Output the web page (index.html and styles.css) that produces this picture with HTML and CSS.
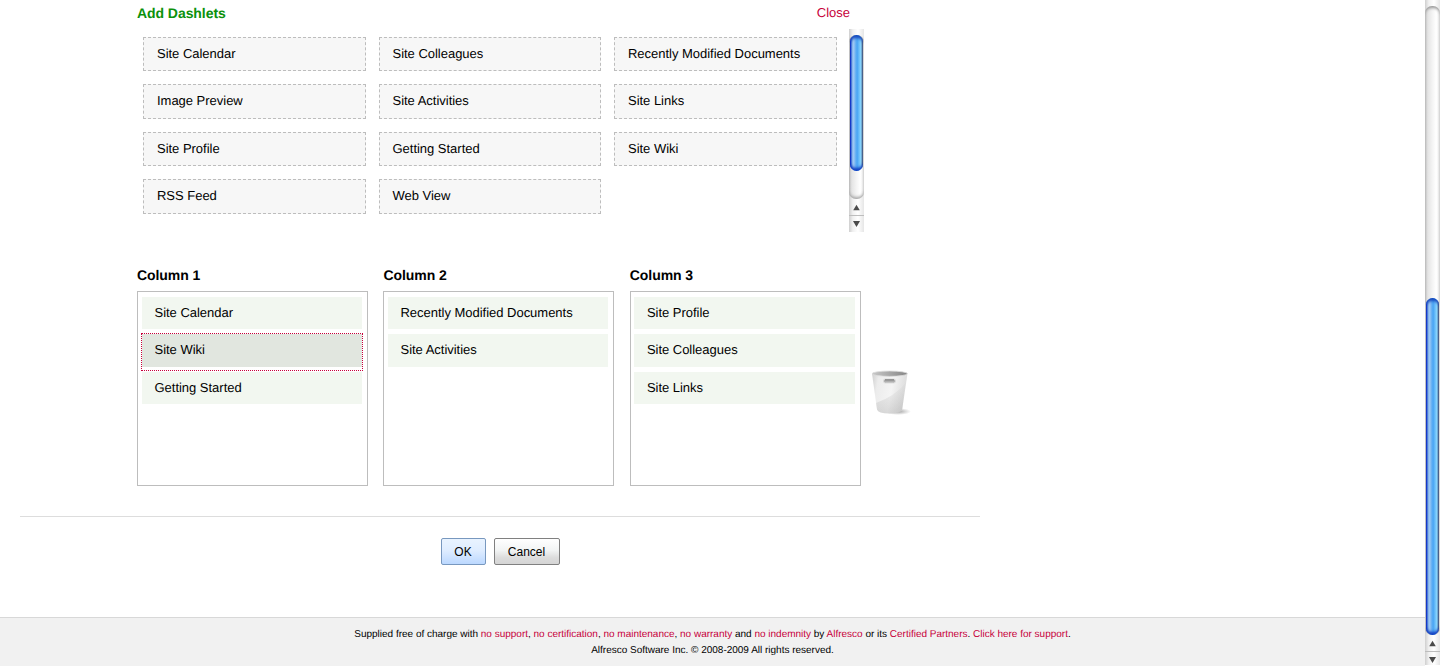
FILE: index.html
```html
<!DOCTYPE html>
<html lang="en">
<head>
<meta charset="utf-8">
<title>Customize Site Dashboard</title>
<link rel="stylesheet" href="styles.css">
</head>
<body>
<div class="page">
  <main class="content">
    <div class="available">
      <div class="available-head">
        <h2 class="heading heading-green">Add Dashlets</h2>
        <a class="link">Close</a>
      </div>
      <div class="palette">
        <ul class="palette-list">
          <li class="palette-item">Site Calendar</li>
          <li class="palette-item">Site Colleagues</li>
          <li class="palette-item">Recently Modified Documents</li>
          <li class="palette-item">Image Preview</li>
          <li class="palette-item">Site Activities</li>
          <li class="palette-item">Site Links</li>
          <li class="palette-item">Site Profile</li>
          <li class="palette-item">Getting Started</li>
          <li class="palette-item">Site Wiki</li>
          <li class="palette-item">RSS Feed</li>
          <li class="palette-item">Web View</li>
        </ul>
        <div class="scrollbar">
          <div class="track"><div class="thumb thumb-palette"></div></div>
          <svg class="arrow arrow-up" viewBox="0 0 15 16"><path d="M4 11L7.5 5L11 11Z"/></svg>
          <svg class="arrow" viewBox="0 0 15 16"><path d="M4 5H11L7.5 11Z"/></svg>
        </div>
      </div>
    </div>
    <div class="columns">
      <section class="column">
        <h3 class="heading">Column 1</h3>
        <ul class="column-list">
          <li class="dashlet">Site Calendar</li>
          <li class="dashlet dashlet-selected">Site Wiki</li>
          <li class="dashlet">Getting Started</li>
        </ul>
      </section>
      <section class="column">
        <h3 class="heading">Column 2</h3>
        <ul class="column-list">
          <li class="dashlet">Recently Modified Documents</li>
          <li class="dashlet">Site Activities</li>
        </ul>
      </section>
      <section class="column">
        <h3 class="heading">Column 3</h3>
        <ul class="column-list">
          <li class="dashlet">Site Profile</li>
          <li class="dashlet">Site Colleagues</li>
          <li class="dashlet">Site Links</li>
        </ul>
      </section>
      <svg class="trash" viewBox="0 0 44 48">
        <defs>
          <linearGradient id="bin" x1="0" x2="1" y1="0" y2=".2">
            <stop offset="0" stop-color="#cfcfcf"/><stop offset=".2" stop-color="#ececec"/><stop offset=".6" stop-color="#f4f4f4"/><stop offset="1" stop-color="#dcdcdc"/>
          </linearGradient>
          <linearGradient id="shade" x1="0" x2="0" y1="0" y2="1">
            <stop offset="0" stop-color="#999" stop-opacity=".03"/><stop offset="1" stop-color="#888" stop-opacity=".26"/>
          </linearGradient>
          <linearGradient id="inside" x1="0" x2="1">
            <stop offset="0" stop-color="#c8c8c8"/><stop offset=".6" stop-color="#a0a0a0"/><stop offset="1" stop-color="#858585"/>
          </linearGradient>
          <radialGradient id="shadow"><stop offset="0" stop-color="#888" stop-opacity=".8"/><stop offset="1" stop-color="#999" stop-opacity="0"/></radialGradient>
        </defs>
        <ellipse cx="28" cy="42.5" rx="13" ry="3.5" fill="url(#shadow)"/>
        <path d="M2 4.5L7 40.5Q8 44.5 19.5 44.5Q31 44.5 32.2 40.5L37.5 4.5Z" fill="url(#bin)"/>
        <path d="M6 34Q25 27 35.6 14L32.2 40.5Q31 44.5 19.5 44.5Q8 44.5 7 40.5Z" fill="url(#shade)"/>
        <ellipse cx="19.7" cy="4.7" rx="17.6" ry="2.7" fill="url(#inside)" stroke="#dedede" stroke-width=".8"/>
        <rect x="13.5" y="10" width="12" height="4" rx="1.8" fill="#b0b0b0" stroke="#dddddd" stroke-width="1"/>
        <path d="M15 10.9H24" stroke="#777" stroke-width="1"/>
      </svg>
    </div>
    <div class="actions">
      <button class="button button-primary">OK</button>
      <button class="button">Cancel</button>
    </div>
  </main>
  <footer class="footer">
    <p>Supplied free of charge with <a class="link">no support</a>, <a class="link">no certification</a>, <a class="link">no maintenance</a>, <a class="link">no warranty</a> and <a class="link">no indemnity</a> by <a class="link">Alfresco</a> or its <a class="link">Certified Partners</a>. <a class="link">Click here for support</a>.</p>
    <p>Alfresco Software Inc. © 2008-2009 All rights reserved.</p>
  </footer>
</div>
<div class="scrollbar scrollbar-window">
  <div class="track track-window"><div class="thumb thumb-window"></div></div>
  <svg class="arrow arrow-up" viewBox="0 0 15 16"><path d="M4 11L7.5 5L11 11Z"/></svg>
  <svg class="arrow" viewBox="0 0 15 16"><path d="M4 5H11L7.5 11Z"/></svg>
</div>
</body>
</html>
```
FILE: styles.css
```css
* { box-sizing: border-box; }
body {
  margin: 0;
  display: flex;
  height: 666px;
  overflow: hidden;
  background: #fff;
  color: #000;
  font: 13px/16px "Liberation Sans", Arial, sans-serif;
  letter-spacing: -0.02px;
  text-rendering: geometricPrecision;
}
ul, p, h2, h3 { margin: 0; padding: 0; list-style: none; }
.page { flex: 1; display: flex; flex-direction: column; }
.content { flex: 1; width: 980px; padding-left: 20px; }
.link { color: #c7003b; }
.heading { font-size: 14px; line-height: 16px; font-weight: bold; letter-spacing: -0.06px; }
.heading-green { color: #0b910b; }

.available { width: 727px; margin-left: 117px; }
.available-head { display: flex; justify-content: space-between; height: 29px; padding: 5px 14px 0 0; }
.palette { display: flex; height: 203px; }
.palette-list {
  flex: 1;
  display: grid;
  grid-template-columns: repeat(3, 222.5px);
  grid-auto-rows: 34.4px;
  gap: 13px;
  padding: 8px 0 0 6px;
}
.palette-item { padding: 8px 13px; border: 1px dashed #bdbdbd; background: #f7f7f7; }

.scrollbar {
  width: 15px;
  display: flex;
  flex-direction: column;
  background: linear-gradient(90deg, #cfcfcf 0, #f0f0f0 25%, #fff 60%, #e6e6e6 100%);
}
.scrollbar-window { height: 665px; }
.track {
  flex: 1;
  margin: 6px 0 1px;
  border-radius: 7px;
  background: linear-gradient(90deg, #c8c8c8 0, #e5e5e5 20%, #f4f4f4 50%, #fff 75%, #e8e8e8 100%);
  box-shadow: inset 0 3px 3px -1px #999, inset 0 -3px 3px -1px #aaa;
}
.thumb {
  width: 13px;
  margin-left: 1px;
  border-radius: 7px;
  background: linear-gradient(90deg, #1736ca 0, #1736ca 7%, #76a9e6 14%, #a0caf4 28%, #69b1f3 43%, #48a4f4 55%, #76c7fb 75%, #91dbff 86%, #557088 93%, #666 100%);
  box-shadow: inset 0 4px 3px -1px #1749bd, inset 0 -4px 3px -1px #123fc2;
}
.thumb-palette { height: 136px; }
.track-window { padding-top: 292px; }
.thumb-window { height: 337px; }
.arrow { display: block; flex: none; width: 15px; height: 16px; fill: #4b4b4b; }
.arrow-up { border-bottom: 1px solid #bdbdbd; }

.columns { display: flex; gap: 15.4px; width: 960px; height: 285px; padding: 35px 0 0 117px; border-bottom: 1px solid #ddd; }
.column { width: 231px; flex: none; }
.column-list {
  display: grid;
  grid-auto-rows: 32.5px;
  align-content: start;
  gap: 5px;
  height: 195px;
  margin-top: 8px;
  padding: 4.5px 5px 0 4px;
  border: 1px solid #bdbdbd;
}
.column + .column .column-list { padding-left: 3.6px; }
.dashlet { padding: 8px 12.5px; background: #f2f7f0; }
.dashlet-selected { position: relative; background: #e1e6df; }
.dashlet-selected::after {
  content: "";
  position: absolute;
  z-index: 1;
  inset: -1px -1px -4px;
  border: 1px dotted #c7003b;
}
.trash { width: 44px; height: 48px; margin: 102px 0 0 -6.4px; }
.actions { display: flex; gap: 8px; padding: 21px 0 0 421px; }
.button {
  width: 66px;
  height: 27px;
  padding: 0 1px 0 0;
  border: 1px solid #808080;
  border-radius: 2px;
  background: linear-gradient(#fff 0, #f2f4f4 45%, #dcdcdc 75%, #d5d5d5 100%);
  color: #000;
  font: 12px/16px "Liberation Sans", Arial, sans-serif;
}
.button-primary { width: 45px; border-color: #7898bf; background: linear-gradient(#e9f3ff, #dfedff 45%, #bcd8ff); }

.footer {
  height: 49px;
  padding: 9px 0 0;
  border-top: 1px solid #d8d8d8;
  background: #f1f1f1;
  text-align: center;
  font-size: 10px;
  line-height: 16px;
  letter-spacing: -0.008px;
}
```
